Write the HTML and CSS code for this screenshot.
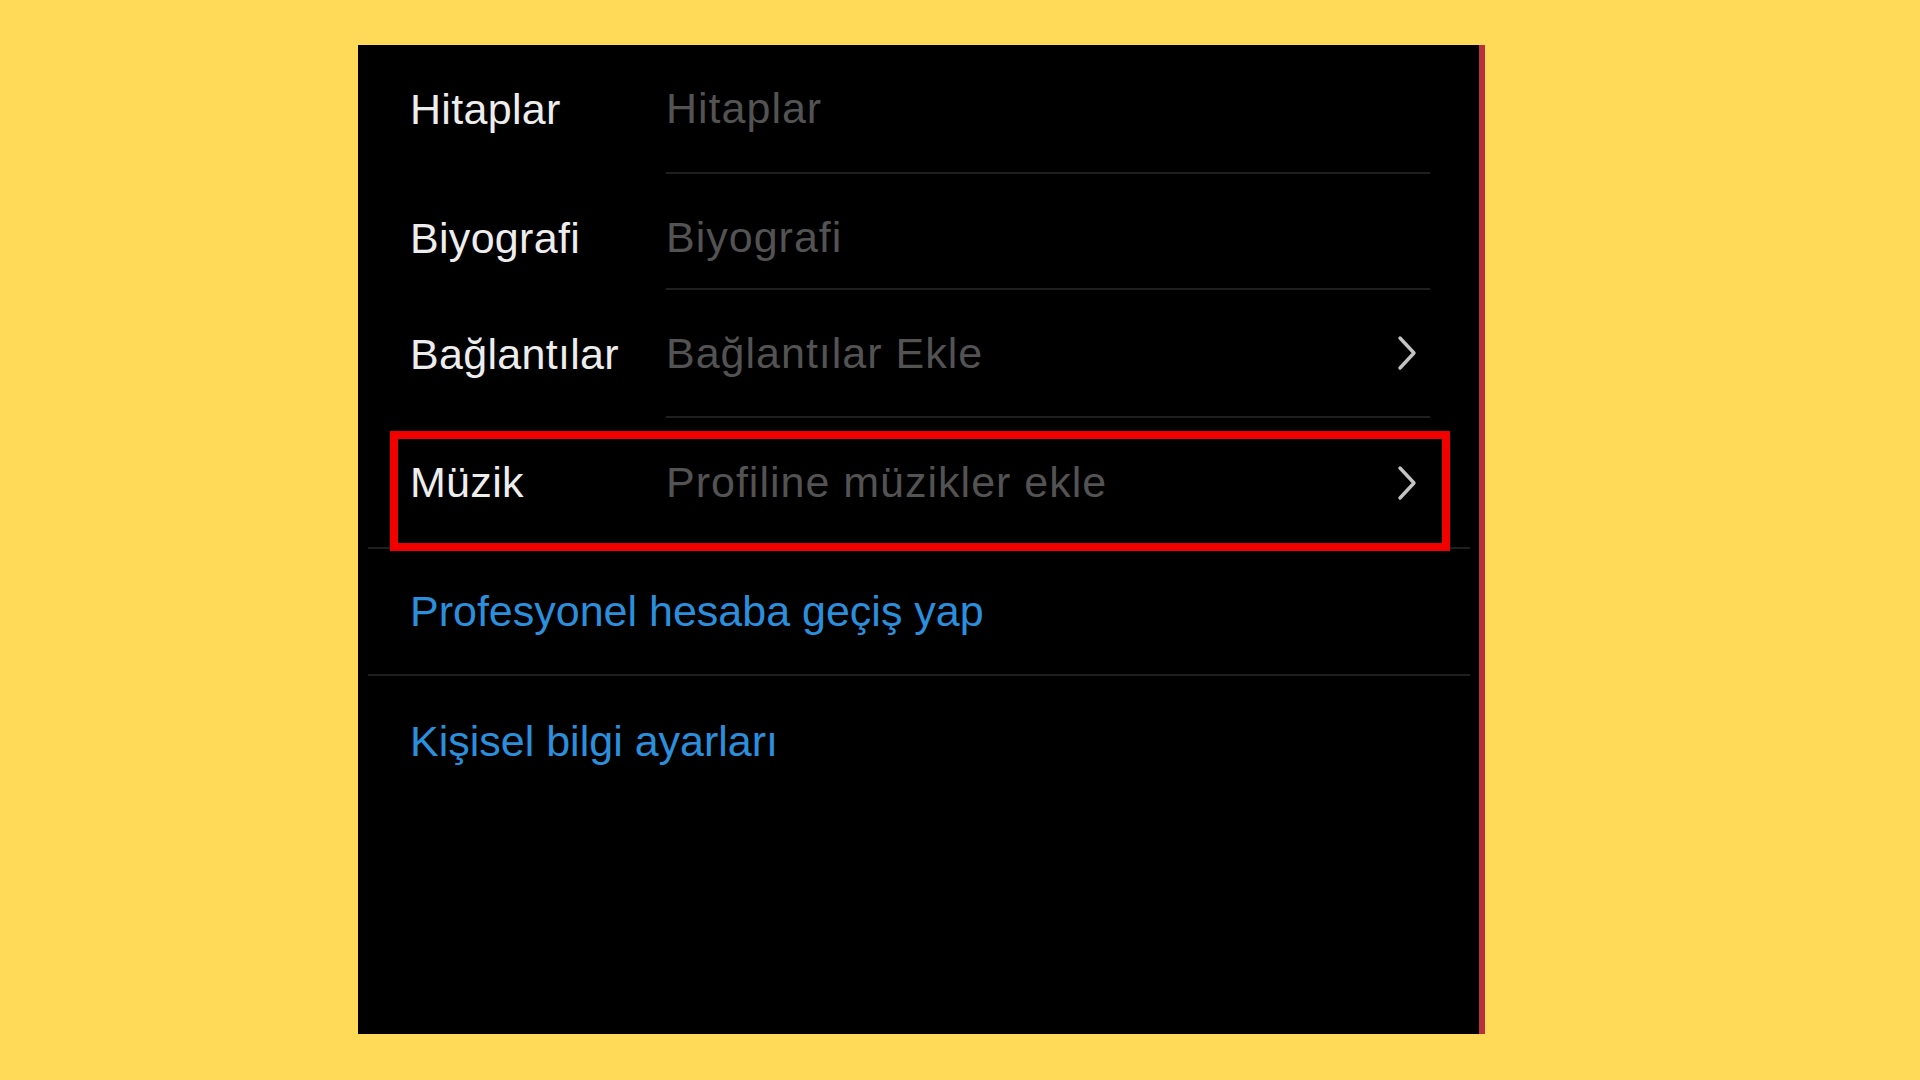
FILE: index.html
```html
<!DOCTYPE html>
<html lang="tr">
<head>
<meta charset="utf-8">
<title>Profili düzenle</title>
<link rel="stylesheet" href="styles.css">
</head>
<body>
<div class="panel">
  <div class="row h129">
    <span class="label">Hitaplar</span>
    <div class="field"><span class="value">Hitaplar</span></div>
  </div>
  <div class="row h116 low">
    <span class="label">Biyografi</span>
    <div class="field"><span class="value">Biyografi</span></div>
  </div>
  <div class="row h128">
    <span class="label">Bağlantılar</span>
    <div class="field">
      <span class="value">Bağlantılar Ekle</span>
      <svg class="chev" width="22" height="38" viewBox="0 0 22 38"><polyline points="4,4 18,19 4,34" fill="none" stroke="#c4c4c4" stroke-width="3.4" stroke-linecap="round" stroke-linejoin="round"/></svg>
    </div>
  </div>
  <div class="row full h131">
    <span class="label">Müzik</span>
    <span class="value grow">Profiline müzikler ekle</span>
    <svg class="chev" width="22" height="38" viewBox="0 0 22 38"><polyline points="4,4 18,19 4,34" fill="none" stroke="#c4c4c4" stroke-width="3.4" stroke-linecap="round" stroke-linejoin="round"/></svg>
    <div class="highlight"></div>
  </div>
  <div class="row full h127">
    <span class="link">Profesyonel hesaba geçiş yap</span>
  </div>
  <div class="row plain h130">
    <span class="link">Kişisel bilgi ayarları</span>
  </div>
</div>
</body>
</html>
```

FILE: styles.css
```css
html, body {
  margin: 0;
  padding: 0;
}
body {
  background: #ffda59;
  width: 1920px;
  height: 1080px;
  overflow: hidden;
  padding: 45px 0 0 358px;
  box-sizing: border-box;
  font-family: "Liberation Sans", Arial, sans-serif;
}
.panel {
  width: 1127px;
  height: 989px;
  background: #000;
  box-sizing: border-box;
  border-right: 6px solid #b8323c;
  display: flex;
  flex-direction: column;
}
.row {
  display: flex;
  align-items: center;
  box-sizing: border-box;
  position: relative;
  font-size: 43px;
}
.h116 { height: 116px; }
.h127 { height: 127px; }
.h128 { height: 128px; }
.h129 { height: 129px; }
.h130 { height: 130px; }
.h131 { height: 131px; }
.row.low .label,
.row.low .value {
  padding-top: 12px;
}
.label {
  flex: 0 0 308px;
  box-sizing: border-box;
  padding-left: 52px;
  color: #ededed;
  letter-spacing: 0.3px;
}
.field {
  flex: 1;
  align-self: stretch;
  display: flex;
  align-items: center;
  margin-right: 49px;
  border-bottom: 2px solid #1f1f1f;
  padding-right: 12px;
}
.value {
  color: #535353;
  flex: 1;
  letter-spacing: 1px;
}
.chev {
  display: block;
  flex: 0 0 auto;
}
.row.full {
  margin: 0 9px 0 10px;
  border-bottom: 2px solid #1f1f1f;
  padding-right: 52px;
}
.row.full .label {
  flex-basis: 298px;
  padding-left: 42px;
}
.link {
  color: #2a8fdc;
  padding-left: 42px;
}
.row.plain .link {
  padding-left: 52px;
}
.highlight {
  position: absolute;
  left: 22px;
  right: 20px;
  top: 13px;
  bottom: -4px;
  border: 8px solid #f20000;
  box-sizing: border-box;
  pointer-events: none;
}
```
